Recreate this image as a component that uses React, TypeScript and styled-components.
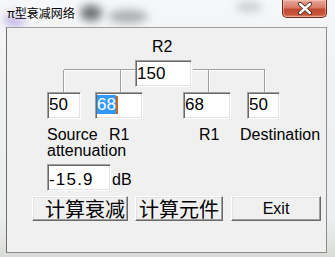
import React from "react";
import styled, { createGlobalStyle } from "styled-components";

const Global = createGlobalStyle`
  html, body { margin: 0; padding: 0; }
  body { width: 335px; height: 257px; overflow: hidden; background: #eef0f2; }
`;

const Window = styled.div`
  position: relative;
  width: 335px;
  height: 257px;
  display: flex;
  flex-direction: column;
  overflow: hidden;
  background: linear-gradient(to bottom, #f6f7f8 0%, #eff1f3 30%, #eceff0 85%, #d9dcd6 100%);
  font-family: "Liberation Sans", Arial, sans-serif;
  color: #000;
`;

const TitleBar = styled.div`
  position: relative;
  height: 27px;
  display: flex;
  align-items: flex-start;
  flex-shrink: 0;
`;

const Blob = styled.span<{ $x: number; $y: number; $w: number; $h: number; $c: string; $b: number }>`
  position: absolute;
  left: ${(p) => p.$x}px;
  top: ${(p) => p.$y}px;
  width: ${(p) => p.$w}px;
  height: ${(p) => p.$h}px;
  border-radius: 50%;
  background: ${(p) => p.$c};
  filter: blur(${(p) => p.$b}px);
`;

const Title = styled.div`
  position: relative;
  margin: 5px 0 0 7px;
  font: 12px/16px "Noto Sans CJK SC", sans-serif;
  text-shadow: 0 0 5px #fff, 0 0 9px #fff, 0 0 12px #fff;
`;

const Close = styled.div`
  position: relative;
  margin-left: auto;
  margin-right: 8px;
  width: 45px;
  height: 18px;
  box-sizing: border-box;
  display: flex;
  align-items: center;
  justify-content: center;
  border: 1px solid #6e2a1e;
  border-top: none;
  border-radius: 0 0 5px 5px;
  background: linear-gradient(to bottom, #e9a99b 0%, #d77a66 45%, #c24a33 55%, #c9553a 85%, #d98a6a 100%);
  box-shadow: inset 0 0 0 1px rgba(255, 220, 200, 0.45);
`;

const Client = styled.div`
  position: relative;
  box-sizing: border-box;
  width: 321px;
  height: 226px;
  margin-left: 6px;
  background: #f0f0f0;
  border: 1px solid;
  border-color: #9e9e9e #8c8c8c #8c8c8c #6e6e6e;
  display: flex;
  flex-direction: column;
`;

const Wires = styled.svg`
  position: absolute;
  left: 0;
  top: 0;
  width: 100%;
  height: 100%;
  pointer-events: none;
`;

const Row = styled.div<{ $mt: number; $pl?: number; $baseline?: boolean }>`
  position: relative;
  display: flex;
  align-items: ${(p) => (p.$baseline ? "baseline" : "flex-start")};
  margin-top: ${(p) => p.$mt}px;
  padding-left: ${(p) => p.$pl ?? 0}px;
`;

const Caption = styled.div<{ $ml?: number }>`
  margin-left: ${(p) => p.$ml ?? 0}px;
  font-size: 16px;
  line-height: 18px;
  white-space: nowrap;
`;

const Edit = styled.div<{ $w: number; $ml?: number; $pt?: number; $ls?: number }>`
  position: relative;
  box-sizing: border-box;
  width: ${(p) => p.$w}px;
  height: 27px;
  margin-left: ${(p) => p.$ml ?? 0}px;
  padding: ${(p) => p.$pt ?? 1}px 0 0 1px;
  background: #fff;
  border: 1px solid;
  border-color: #a0a0a0 #ffffff #ffffff #a0a0a0;
  box-shadow: inset 1px 1px 0 #696969, inset -1px -1px 0 #e3e3e3;
  font-size: 17px;
  line-height: 22px;
  letter-spacing: ${(p) => p.$ls ?? 0}px;
  white-space: nowrap;
  overflow: hidden;
`;

const Selected = styled.span`
  background: #3399ff;
  color: #fff;
`;

const Caret = styled.span`
  display: inline-block;
  width: 2px;
  height: 18px;
  vertical-align: -4px;
  background: #c8661e;
`;

const Labels = styled.div`
  display: grid;
  grid-template-columns: 62px 90px 41px auto;
  margin-top: 8px;
  padding-left: 40px;
  font-size: 16px;
  line-height: 16px;
  white-space: nowrap;
`;

const Unit = styled.div`
  margin-left: 1px;
  font-size: 16px;
`;

const Button = styled.div<{ $w: number; $ml: number; $pl?: number; $cjk?: boolean }>`
  box-sizing: border-box;
  width: ${(p) => p.$w}px;
  height: 25px;
  margin-left: ${(p) => p.$ml}px;
  padding-left: ${(p) => p.$pl ?? 0}px;
  display: flex;
  align-items: center;
  justify-content: ${(p) => (p.$pl ? "flex-start" : "center")};
  background: #f0f0f0;
  border: 1px solid;
  border-color: #ffffff #696969 #696969 #ffffff;
  box-shadow: inset -1px -1px 0 #a0a0a0, inset 1px 1px 0 #e3e3e3;
  font-family: ${(p) => (p.$cjk ? '"Noto Sans CJK SC", sans-serif' : '"Liberation Sans", Arial, sans-serif')};
  font-size: ${(p) => (p.$cjk ? 20 : 16)}px;
  line-height: 23px;
  white-space: nowrap;
`;

const wires: Array<[number, number, number, number]> = [
  [56, 41, 128, 41],
  [56, 41, 56, 64],
  [113, 41, 113, 64],
  [185, 41, 257, 41],
  [201, 41, 201, 64],
  [257, 41, 257, 64],
];

export default function App() {
  return (
    <Window>
      <Global />
      <TitleBar>
        <Blob $x={5} $y={12} $w={20} $h={14} $c="#b9a6e8" $b={4} />
        <Blob $x={80} $y={5} $w={22} $h={16} $c="#6f7276" $b={4} />
        <Blob $x={108} $y={10} $w={40} $h={13} $c="#a9acb0" $b={4} />
        <Blob $x={236} $y={2} $w={26} $h={10} $c="#c9ccd0" $b={4} />
        <Title>π型衰减网络</Title>
        <Close>
          <svg width="16" height="13" viewBox="0 0 16 13">
            <path d="M3 2 L13 11 M13 2 L3 11" stroke="#4a2a22" strokeWidth="4.2" strokeLinecap="round" />
            <path d="M3 2 L13 11 M13 2 L3 11" stroke="#ffffff" strokeWidth="2.4" strokeLinecap="round" />
          </svg>
        </Close>
      </TitleBar>
      <Client>
        <Wires viewBox="0 0 319 224">
          {wires.map(([x1, y1, x2, y2], i) => (
            <line
              key={"w" + i}
              x1={x1 + (x1 === x2 ? 1.5 : 0.5)}
              y1={y1 + (y1 === y2 ? 1.5 : 0.5)}
              x2={x2 + (x1 === x2 ? 1.5 : 0.5)}
              y2={y2 + (y1 === y2 ? 1.5 : 0.5)}
              stroke="#ffffff"
              strokeWidth="1"
              shapeRendering="crispEdges"
            />
          ))}
          {wires.map(([x1, y1, x2, y2], i) => (
            <line
              key={"g" + i}
              x1={x1 + 0.5}
              y1={y1 + 0.5}
              x2={x2 + 0.5}
              y2={y2 + 0.5}
              stroke="#a0a0a0"
              strokeWidth="1"
              shapeRendering="crispEdges"
            />
          ))}
        </Wires>
        <Row $mt={10} $pl={145}>
          <Caption>R2</Caption>
        </Row>
        <Row $mt={4} $pl={128}>
          <Edit $w={57} $pt={2}>150</Edit>
        </Row>
        <Row $mt={5} $pl={40}>
          <Edit $w={34}>50</Edit>
          <Edit $w={48} $ml={14}>
            <Selected>68</Selected>
            <Caret />
          </Edit>
          <Edit $w={48} $ml={40}>68</Edit>
          <Edit $w={33} $ml={16}>50</Edit>
        </Row>
        <Labels>
          <span>
            Source
            <br />
            attenuation
          </span>
          <span>R1</span>
          <span>R1</span>
          <span>Destination</span>
        </Labels>
        <Row $mt={5} $pl={40} $baseline>
          <Edit $w={64} $pt={4} $ls={1.2}>-15.9</Edit>
          <Unit>dB</Unit>
        </Row>
        <Row $mt={5} $pl={25}>
          <Button $w={96} $ml={0} $pl={12} $cjk>计算衰减</Button>
          <Button $w={88} $ml={7} $cjk>计算元件</Button>
          <Button $w={90} $ml={8}>Exit</Button>
        </Row>
      </Client>
    </Window>
  );
}
